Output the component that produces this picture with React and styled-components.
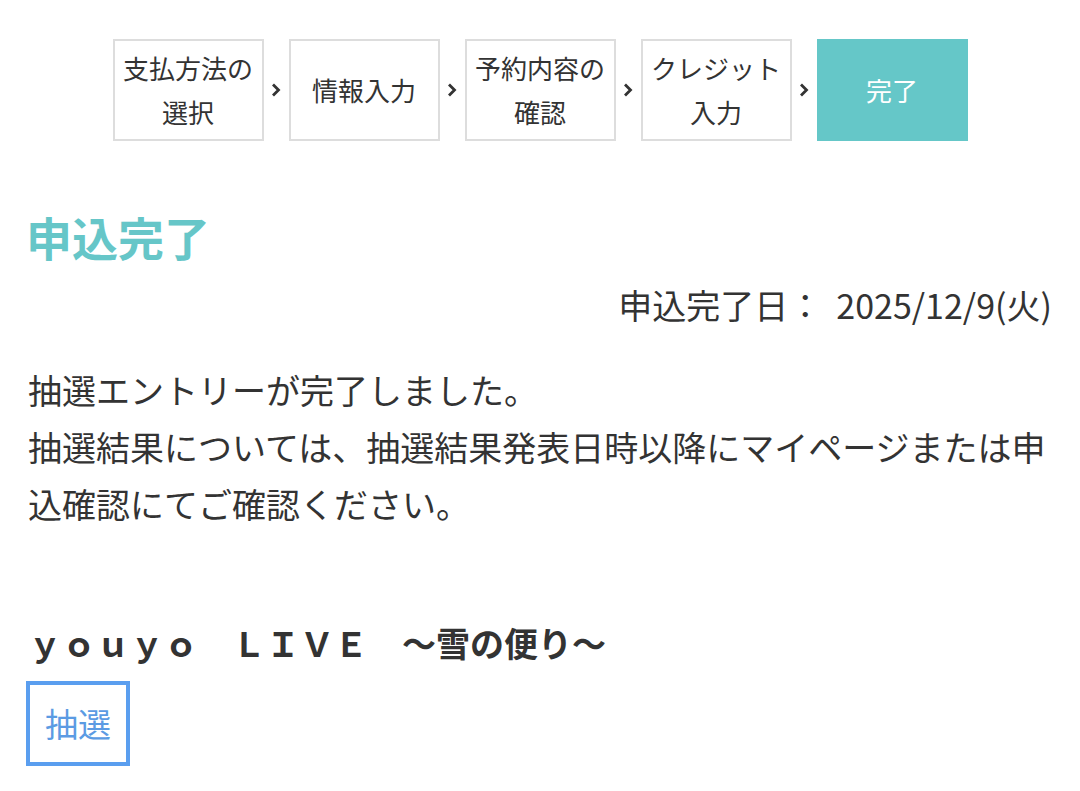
import React from "react";
import styled, { createGlobalStyle } from "styled-components";

const Global = createGlobalStyle`
  html, body { margin: 0; padding: 0; background: #fff; }
  body {
    font-family: "Noto Sans CJK JP", "Noto Sans", sans-serif;
    color: #333;
  }
`;

const Page = styled.div`
  width: 1080px;
  padding: 39px 28px 0;
  box-sizing: border-box;
`;

const Steps = styled.ol`
  list-style: none;
  margin: 0;
  padding: 0;
  display: flex;
  justify-content: center;
  align-items: center;
`;

const Step = styled.li`
  width: 151px;
  height: 102px;
  box-sizing: border-box;
  border: ${(p) => (p.$active ? "none" : "2px solid #dddddd")};
  background: ${(p) => (p.$active ? "#65c7c8" : "#fff")};
  color: ${(p) => (p.$active ? "#fff" : "#333")};
  display: flex;
  align-items: center;
  justify-content: center;
  text-align: center;
  font-size: 26px;
  line-height: 44px;
  padding: 0 8px;
`;

const Arrow = styled.li`
  width: 25px;
  display: flex;
  justify-content: center;
  align-items: center;
`;

const Chevron = () => (
  <svg width="12" height="16" viewBox="0 0 12 16">
    <path d="M3 2.5 L8.5 8 L3 13.5" fill="none" stroke="#333" strokeWidth="2.8" />
  </svg>
);

const Heading = styled.h1`
  margin: 61px 0 0 -2px;
  font-size: 46px;
  line-height: 69px;
  font-weight: 700;
  color: #66c6c8;
`;

const DateLine = styled.p`
  margin: 10px 0 0;
  display: flex;
  justify-content: flex-end;
  gap: 14px;
  font-size: 34px;
  line-height: 48px;
`;

const Message = styled.p`
  margin: 32px 0 0;
  font-size: 34px;
  line-height: 57px;
`;

const EventTitle = styled.h2`
  margin: 86px 0 0;
  font-size: 34px;
  line-height: 50px;
  font-weight: 700;
`;

const Badge = styled.span`
  display: inline-block;
  margin: 13px 0 0 -2px;
  border: 4px solid #5a9eef;
  color: #5b9be3;
  font-size: 33px;
  line-height: 77px;
  padding: 0 15px;
`;

const steps = ["支払方法の選択", "情報入力", "予約内容の確認", "クレジット入力", "完了"];

export default function App() {
  return (
    <>
      <Global />
      <Page>
        <Steps>
          {steps.map((s, i) => (
            <React.Fragment key={s}>
              {i > 0 && (
                <Arrow>
                  <Chevron />
                </Arrow>
              )}
              <Step $active={i === steps.length - 1}>{s}</Step>
            </React.Fragment>
          ))}
        </Steps>
        <Heading>申込完了</Heading>
        <DateLine>
          <span>申込完了日：</span>
          <span>2025/12/9(火)</span>
        </DateLine>
        <Message>
          抽選エントリーが完了しました。
          <br />
          抽選結果については、抽選結果発表日時以降にマイページまたは申込確認にてご確認ください。
        </Message>
        <EventTitle>ｙｏｕｙｏ　ＬＩＶＥ　～雪の便り～</EventTitle>
        <Badge>抽選</Badge>
      </Page>
    </>
  );
}
